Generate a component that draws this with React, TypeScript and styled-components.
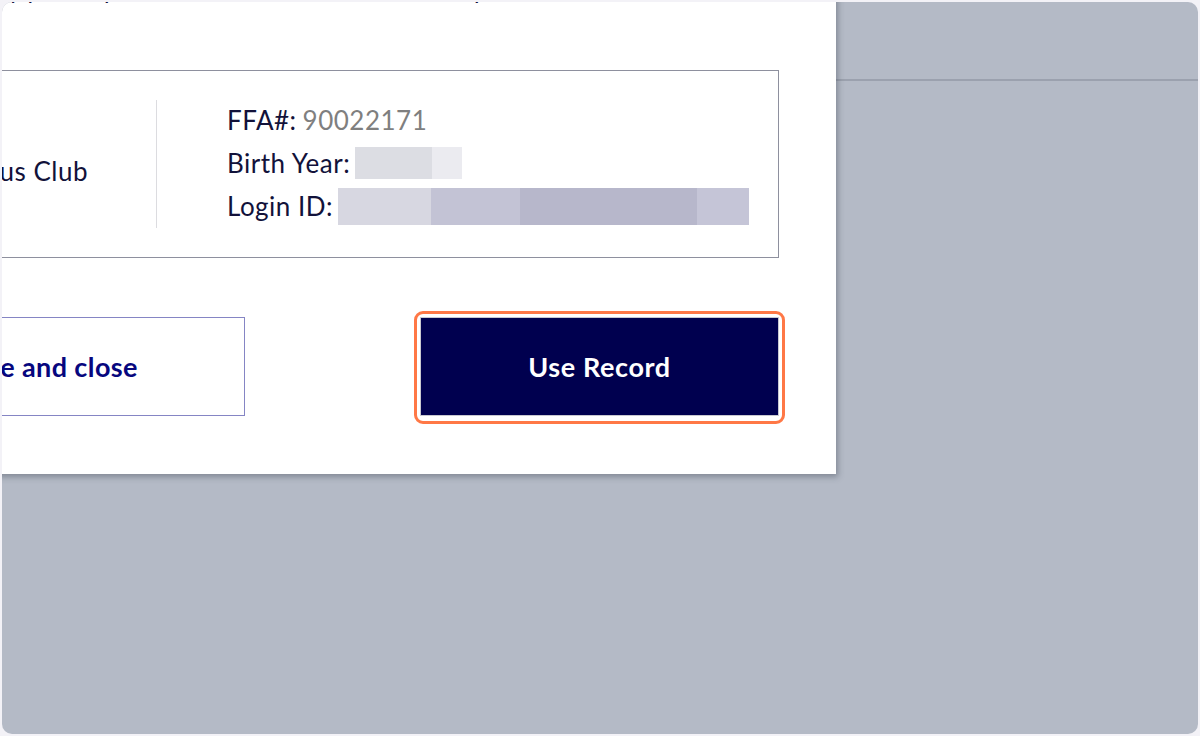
import React from "react";
import styled, { createGlobalStyle } from "styled-components";

const Global = createGlobalStyle`
  html, body { margin: 0; padding: 0; background: #f3f2f7; }
  body { font-family: Lato, "Noto Sans", sans-serif; }
`;

const Frame = styled.div`
  width: 1200px;
  height: 736px;
  padding: 2px;
  box-sizing: border-box;
  background: #f3f2f7;
`;

const Screen = styled.div`
  position: relative;
  width: 100%;
  height: 100%;
  border-radius: 10px;
  overflow: hidden;
  background: #b4bac6;
`;

const PageHeader = styled.div`
  height: 77px;
  border-bottom: 2px solid #9ba1ae;
`;

const Modal = styled.div`
  position: absolute;
  left: -240px;
  top: -60px;
  width: 1074px;
  height: 532px;
  box-sizing: border-box;
  padding: 34px 57px 58px 56px;
  background: #ffffff;
  box-shadow: 2px 3px 6px rgba(40, 45, 60, 0.35);
  display: flex;
  flex-direction: column;
`;

const Intro = styled.p`
  margin: 0 0 66px;
  height: 28px;
  font-size: 24px;
  line-height: 28px;
  letter-spacing: 0.5px;
  color: #0f0f3d;
  white-space: nowrap;
  padding-left: 134px;
`;

const Card = styled.div`
  height: 188px;
  box-sizing: border-box;
  border: 1px solid #8e909e;
  padding: 0 24px;
  display: flex;
  align-items: center;
`;

const ClubCol = styled.div`
  flex: 0 0 245px;
  width: 245px;
  min-width: 0;
  display: flex;
  justify-content: flex-end;
  padding-top: 14px;
  font-size: 26px;
  letter-spacing: 0.5px;
  color: #12123a;
  white-space: nowrap;
`;

const Divider = styled.div`
  flex: 0 0 1px;
  width: 1px;
  height: 128px;
  background: #dcdce0;
  margin: 0 70px 0 68px;
`;

const InfoCol = styled.div`
  flex: 0 0 auto;
  display: flex;
  flex-direction: column;
  margin-top: -2px;
`;

const InfoLine = styled.div`
  height: 43px;
  display: flex;
  align-items: center;
  font-size: 26px;
  letter-spacing: 0.5px;
  color: #12123a;
  white-space: nowrap;
`;

const Value = styled.span`
  color: #7f7f7f;
  margin-left: 6px;
`;

const Redacted = styled.span<{ $h: number }>`
  display: inline-flex;
  height: ${(p) => p.$h}px;
  margin-left: 5px;
`;

const Seg = styled.span<{ $c: string }>`
  display: block;
  flex: 0 0 auto;
  height: 100%;
  background: ${(p) => p.$c};
`;

const ButtonRow = styled.div`
  margin-top: 59px;
  display: flex;
  justify-content: flex-end;
  gap: 175px;
`;

const OutlineButton = styled.button`
  flex: 0 0 359px;
  height: 99px;
  box-sizing: border-box;
  background: #ffffff;
  border: 1px solid #8585c4;
  font-family: Lato, "Noto Sans", sans-serif;
  font-weight: 700;
  font-size: 27px;
  letter-spacing: 0.4px;
  color: #07077e;
  padding: 0 36px 0 0;
`;

const Highlight = styled.div`
  position: relative;
  flex: 0 0 359px;
  &::after {
    content: "";
    position: absolute;
    inset: -6px -6px -8px -6px;
    border: 3px solid #ff7846;
    border-radius: 9px;
    pointer-events: none;
  }
`;

const SolidButton = styled.button`
  display: block;
  width: 359px;
  height: 99px;
  box-sizing: border-box;
  background: #00004f;
  border: 1px solid #c8c8d0;
  font-family: Lato, "Noto Sans", sans-serif;
  font-weight: 700;
  font-size: 27px;
  letter-spacing: 0.6px;
  color: #ffffff;
`;

const birth = [
  { w: 77, c: "#dcdde3" },
  { w: 30, c: "#ebebf0" },
];
const login = [
  { w: 93, c: "#d7d7e1" },
  { w: 89, c: "#c3c3d5" },
  { w: 177, c: "#b7b7cb" },
  { w: 52, c: "#c5c5d7" },
];

export default function App() {
  return (
    <>
      <Global />
      <Frame>
        <Screen>
          <PageHeader />
          <Modal>
            <Intro>Kindly please provide the current info below or press Use Record if this is a match</Intro>
            <Card>
              <ClubCol>Sydney Olympus Club</ClubCol>
              <Divider />
              <InfoCol>
                <InfoLine>
                  FFA#:<Value>90022171</Value>
                </InfoLine>
                <InfoLine>
                  Birth Year:
                  <Redacted $h={32}>
                    {birth.map((s, i) => (
                      <Seg key={i} $c={s.c} style={{ width: s.w }} />
                    ))}
                  </Redacted>
                </InfoLine>
                <InfoLine>
                  Login ID:
                  <Redacted $h={37}>
                    {login.map((s, i) => (
                      <Seg key={i} $c={s.c} style={{ width: s.w }} />
                    ))}
                  </Redacted>
                </InfoLine>
              </InfoCol>
            </Card>
            <ButtonRow>
              <OutlineButton>Save and close</OutlineButton>
              <Highlight>
                <SolidButton>Use Record</SolidButton>
              </Highlight>
            </ButtonRow>
          </Modal>
        </Screen>
      </Frame>
    </>
  );
}
